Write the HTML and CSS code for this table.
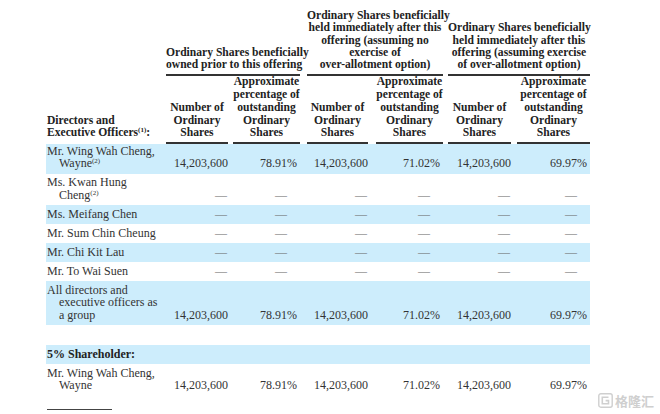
FILE: index.html
```html
<!DOCTYPE html>
<html lang="en">
<head>
	<meta charset="UTF-8">
	<title>Beneficial Ownership</title>
	<link rel="stylesheet" href="styles.css">
</head>
<body>
	<div class="page">
		<table class="holdings">
			<colgroup>
				<col class="w-label">
				<col class="w-num1">
				<col class="w-pct1">
				<col class="w-num2">
				<col class="w-pct2">
				<col class="w-num3">
				<col class="w-pct3">
			</colgroup>
			<thead>
				<tr class="groups">
					<th></th>
					<th colspan="2" class="gap-3"><div class="cap">Ordinary Shares beneficially<br>owned prior to this offering</div></th>
					<th colspan="2" class="gap-7"><div class="cap">Ordinary Shares beneficially<br>held immediately after this<br>offering (assuming no<br>exercise of<br>over-allotment option)</div></th>
					<th colspan="2" class="gap-5"><div class="cap">Ordinary Shares beneficially<br>held immediately after this<br>offering (assuming exercise<br>of over-allotment option)</div></th>
				</tr>
				<tr class="subs">
					<th class="label-head">Directors and<br>Executive Officers<sup>(1)</sup>:</th>
					<th class="gap-3"><div class="cap">Number of<br>Ordinary<br>Shares</div></th>
					<th class="gap-5"><div class="cap">Approximate<br>percentage of<br>outstanding<br>Ordinary<br>Shares</div></th>
					<th class="gap-7"><div class="cap">Number of<br>Ordinary<br>Shares</div></th>
					<th class="gap-8"><div class="cap">Approximate<br>percentage of<br>outstanding<br>Ordinary<br>Shares</div></th>
					<th class="gap-5"><div class="cap">Number of<br>Ordinary<br>Shares</div></th>
					<th class="gap-6"><div class="cap">Approximate<br>percentage of<br>outstanding<br>Ordinary<br>Shares</div></th>
				</tr>
			</thead>
			<tbody>
				<tr class="band first">
					<td class="name"><div>Mr. Wing Wah Cheng,<br>Wayne<sup>(2)</sup></div></td>
					<td class="num">14,203,600</td>
					<td class="pct">78.91%</td>
					<td class="num">14,203,600</td>
					<td class="pct">71.02%</td>
					<td class="num">14,203,600</td>
					<td class="pct">69.97%</td>
				</tr>
				<tr>
					<td class="name"><div>Ms. Kwan Hung<br>Cheng<sup>(2)</sup></div></td>
					<td class="num dash">—</td>
					<td class="pct dash">—</td>
					<td class="num dash">—</td>
					<td class="pct dash">—</td>
					<td class="num dash">—</td>
					<td class="pct dash">—</td>
				</tr>
				<tr class="band">
					<td class="name"><div>Ms. Meifang Chen</div></td>
					<td class="num dash">—</td>
					<td class="pct dash">—</td>
					<td class="num dash">—</td>
					<td class="pct dash">—</td>
					<td class="num dash">—</td>
					<td class="pct dash">—</td>
				</tr>
				<tr>
					<td class="name"><div>Mr. Sum Chin Cheung</div></td>
					<td class="num dash">—</td>
					<td class="pct dash">—</td>
					<td class="num dash">—</td>
					<td class="pct dash">—</td>
					<td class="num dash">—</td>
					<td class="pct dash">—</td>
				</tr>
				<tr class="band">
					<td class="name"><div>Mr. Chi Kit Lau</div></td>
					<td class="num dash">—</td>
					<td class="pct dash">—</td>
					<td class="num dash">—</td>
					<td class="pct dash">—</td>
					<td class="num dash">—</td>
					<td class="pct dash">—</td>
				</tr>
				<tr>
					<td class="name"><div>Mr. To Wai Suen</div></td>
					<td class="num dash">—</td>
					<td class="pct dash">—</td>
					<td class="num dash">—</td>
					<td class="pct dash">—</td>
					<td class="num dash">—</td>
					<td class="pct dash">—</td>
				</tr>
				<tr class="band">
					<td class="name"><div>All directors and<br>executive officers as<br>a group</div></td>
					<td class="num">14,203,600</td>
					<td class="pct">78.91%</td>
					<td class="num">14,203,600</td>
					<td class="pct">71.02%</td>
					<td class="num">14,203,600</td>
					<td class="pct">69.97%</td>
				</tr>
				<tr class="spacer">
					<td colspan="7"></td>
				</tr>
				<tr class="band">
					<td class="name section" colspan="7"><div>5% Shareholder:</div></td>
				</tr>
				<tr>
					<td class="name"><div>Mr. Wing Wah Cheng,<br>Wayne</div></td>
					<td class="num">14,203,600</td>
					<td class="pct">78.91%</td>
					<td class="num">14,203,600</td>
					<td class="pct">71.02%</td>
					<td class="num">14,203,600</td>
					<td class="pct">69.97%</td>
				</tr>
			</tbody>
		</table>
		<div class="footnote-rule"></div>
	</div>

	<div class="watermark">
		<svg width="15" height="15" viewBox="0 0 15 15">
			<rect x="0.8" y="0.8" width="13.4" height="13.4" rx="2" fill="none" stroke="#cfcfcf" stroke-width="1.4"/>
			<path d="M10.5 4.2 H4.3 V10.8 H10.5 V7.6 H7.6" fill="none" stroke="#cfcfcf" stroke-width="1.6"/>
		</svg>
		<span>格隆汇</span>
	</div>
</body>
</html>
```
FILE: styles.css
```css
body{
	margin: 0;
	font: 12px/12.5px "Liberation Serif", "Times New Roman", serif;
	color: #333;
	background: #fff;
}
.page{
	position: relative;
	padding: 10px 0 0 46px;
}
sup{
	font-size: 7px;
	line-height: 0;
	vertical-align: 4px;
}

/* table */
.holdings{
	table-layout: fixed;
	width: 544px;
	border-collapse: collapse;
	border-spacing: 0;
}
.w-label{ width: 117px; }
.w-num1{ width: 65px; }
.w-pct1{ width: 72px; }
.w-num2{ width: 68px; }
.w-pct2{ width: 75px; }
.w-num3{ width: 68px; }
.w-pct3{ width: 79px; }

.holdings th{
	padding: 0;
	font-size: 11.6px;
	font-weight: bold;
	color: #222;
	text-align: center;
	vertical-align: bottom;
	white-space: nowrap;
}
.holdings th .cap{
	padding-bottom: 2px;
	border-bottom: 2px solid #333;
}
.holdings .groups th{
	line-height: 12.3px;
}
.holdings .groups th .cap{
	padding-bottom: 3px;
}
.holdings .subs th{
	line-height: 12.7px;
}
.holdings th.label-head{
	text-align: left;
	padding: 0 0 4px 1px;
}
.gap-3{ padding-left: 3px !important; }
.gap-5{ padding-left: 5px !important; }
.gap-6{ padding-left: 6px !important; }
.gap-7{ padding-left: 7px !important; }
.gap-8{ padding-left: 8px !important; }

.holdings td{
	padding: 2.5px 0 4px;
	vertical-align: bottom;
	white-space: nowrap;
}
.holdings tr.first td{
	padding-top: 0.5px;
}
.holdings tr.band td{
	background: #cdedfc;
}
.holdings td.name{
	padding-left: 1px;
}
.holdings td.name div{
	padding-left: 12px;
	text-indent: -12px;
}
.holdings td.section{
	font-weight: bold;
	color: #222;
}
.holdings td.num{
	text-align: right;
}
.holdings td.pct{
	text-align: right;
	padding-right: 3px;
}
.holdings td.dash{
	color: #666;
}
.holdings td.num.dash{
	padding-right: 1px;
}
.holdings td.pct.dash{
	padding-right: 13px;
}
.holdings tr.spacer td{
	height: 20px;
	padding: 0;
}

.footnote-rule{
	width: 65px;
	margin: 13px 0 0 1px;
	border-top: 1px solid #444;
}

/* watermark */
.watermark{
	position: absolute;
	left: 598px;
	top: 393px;
	display: flex;
	align-items: center;
	gap: 2px;
	color: #cfcfcf;
	font: bold 13px/15px "Noto Sans CJK SC", sans-serif;
}
.watermark svg{
	display: block;
}
```
